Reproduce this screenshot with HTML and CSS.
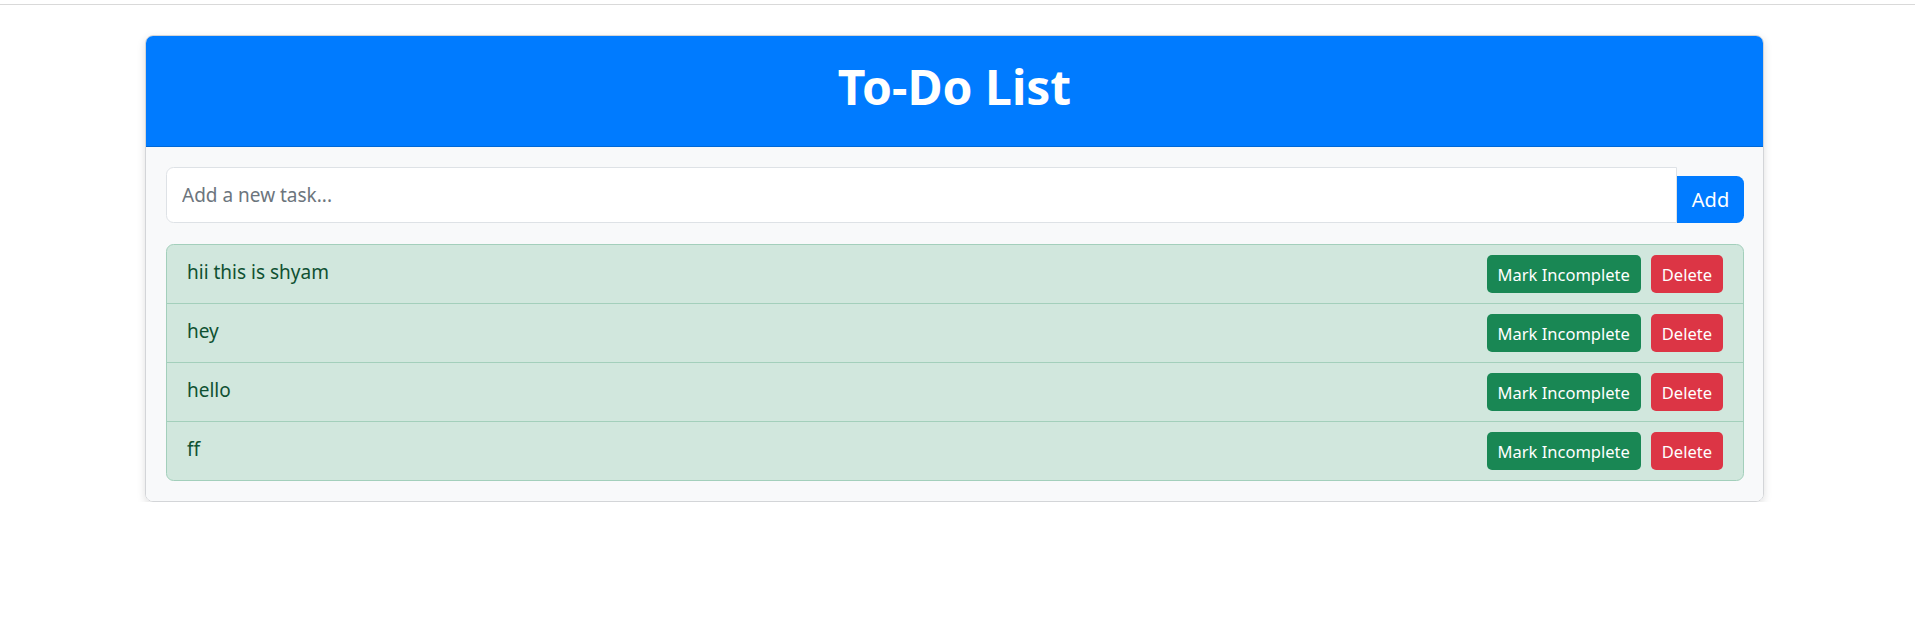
FILE: index.html
```html
<!DOCTYPE html>
<html lang="en">
<head>
<meta charset="utf-8">
<title>To-Do List</title>
<link rel="stylesheet" href="styles.css">
</head>
<body>
<div class="topbar"></div>
<div class="container">
  <div class="card">
    <div class="card-header">
      <h1 class="title">To-Do List</h1>
    </div>
    <div class="card-body">
      <div class="input-group">
        <input class="task-input" type="text" placeholder="Add a new task...">
        <button class="btn btn-add">Add</button>
      </div>
      <ul class="list">
        <li class="item"><span class="item-text">hii this is shyam</span><span class="actions"><button class="btn btn-sm btn-success">Mark Incomplete</button><button class="btn btn-sm btn-danger">Delete</button></span></li>
        <li class="item"><span class="item-text">hey</span><span class="actions"><button class="btn btn-sm btn-success">Mark Incomplete</button><button class="btn btn-sm btn-danger">Delete</button></span></li>
        <li class="item"><span class="item-text">hello</span><span class="actions"><button class="btn btn-sm btn-success">Mark Incomplete</button><button class="btn btn-sm btn-danger">Delete</button></span></li>
        <li class="item"><span class="item-text">ff</span><span class="actions"><button class="btn btn-sm btn-success">Mark Incomplete</button><button class="btn btn-sm btn-danger">Delete</button></span></li>
      </ul>
    </div>
  </div>
</div>
</body>
</html>
```

FILE: styles.css
```css
* { box-sizing: border-box; }
body {
  margin: 0;
  background: #fff;
  font-family: "Noto Sans", "Open Sans", sans-serif;
  color: #212529;
}
.topbar {
  height: 5px;
  border-bottom: 1px solid #d9d9d9;
}
.container {
  width: 1619px;
  margin: 30px 0 0 145px;
}
.card {
  border: 1px solid #d3d5d8;
  border-radius: 8px;
  overflow: hidden;
  box-shadow: 0 3px 8px rgba(0, 0, 0, 0.13);
}
.card-header {
  background: #007bff;
  border-bottom: 1px solid #0068d6;
  height: 111px;
  display: flex;
  align-items: center;
  justify-content: center;
  padding-bottom: 8px;
}
.title {
  margin: 0;
  color: #fff;
  font-size: 48px;
  font-weight: 700;
  line-height: 1.2;
}
.card-body {
  background: #f8f9fa;
  padding: 20px 19px 20px 20px;
}
.input-group {
  display: flex;
  align-items: flex-end;
}
.task-input {
  flex: 1;
  height: 56px;
  border: 1px solid #dee2e6;
  border-radius: 7.5px 0 0 7.5px;
  padding: 0 15px;
  font-family: inherit;
  font-size: 19px;
  color: #212529;
  background: #fff;
  outline: none;
}
.task-input::placeholder { color: #6c757d; }
.btn {
  border: none;
  font-family: inherit;
  color: #fff;
  cursor: pointer;
}
.btn-add {
  width: 67px;
  height: 47px;
  background: #007bff;
  font-size: 20px;
  border-radius: 0 7.5px 7.5px 0;
}
.list {
  list-style: none;
  margin: 21px 0 0;
  padding: 0;
  background: #d1e7dd;
  border: 1px solid #a3cfbb;
  border-radius: 7.5px;
}
.item {
  display: flex;
  justify-content: space-between;
  padding: 10px 20px;
  border-top: 1px solid #a3cfbb;
}
.item:first-child { border-top: none; }
.item-text {
  font-size: 19px;
  line-height: 30px;
  padding-top: 2px;
  color: #0f5132;
}
.actions {
  display: flex;
  gap: 10px;
}
.btn-sm {
  height: 38px;
  padding: 0 11px;
  font-size: 16.5px;
  border-radius: 5px;
}
.btn-success { background: #198754; }
.btn-danger { background: #dc3545; }
```
